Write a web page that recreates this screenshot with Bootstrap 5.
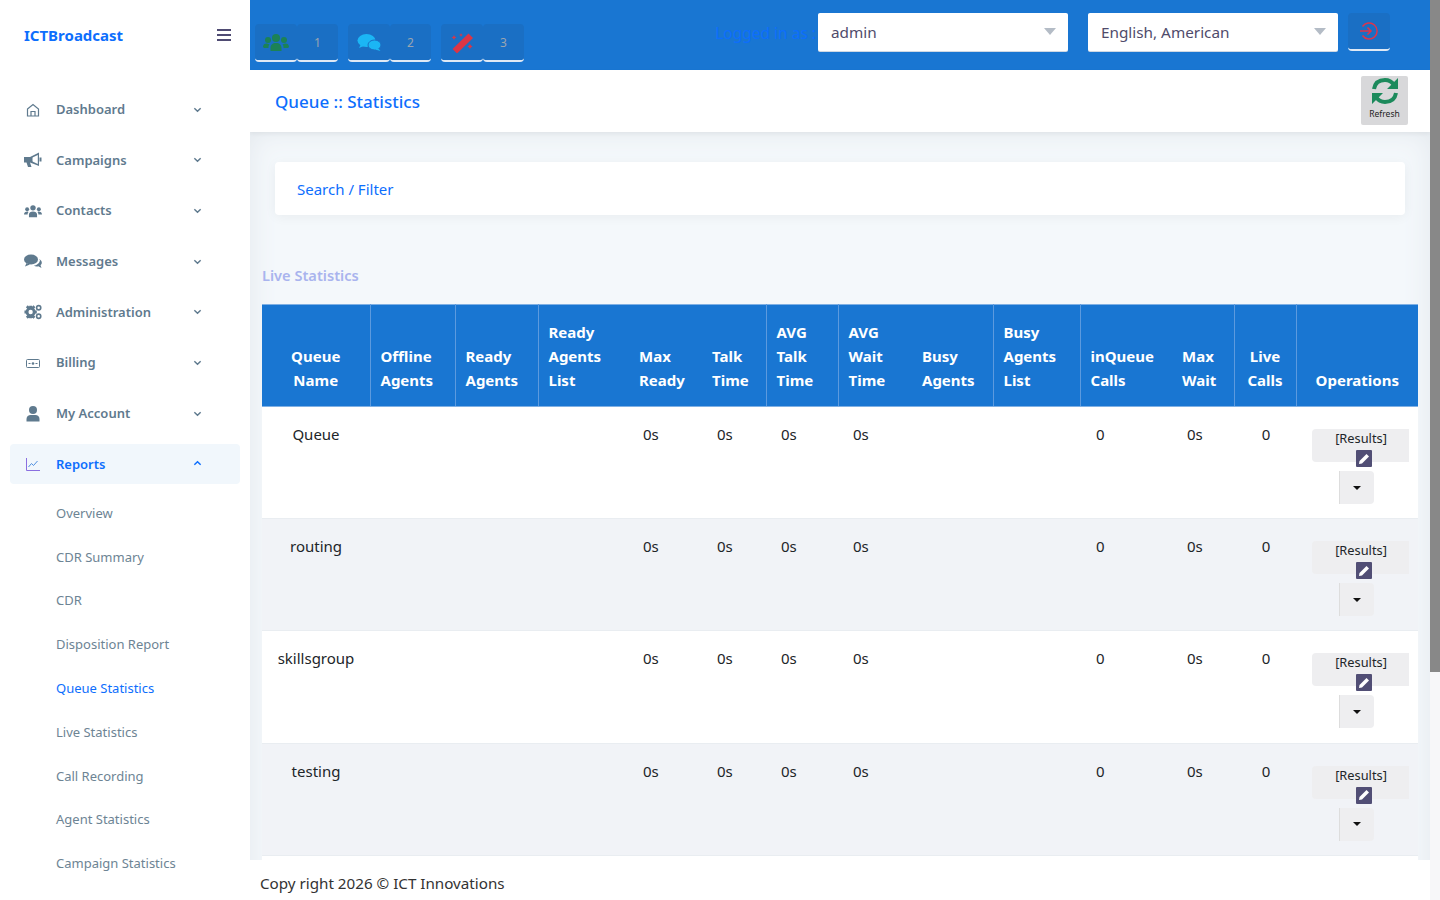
<!DOCTYPE html>
<html lang="en">
<head>
  <title>Queue Statistics</title>
  <meta charset="utf-8">
  <meta name="viewport" content="width=device-width, initial-scale=1">
  <link href="https://cdn.jsdelivr.net/npm/bootstrap@5.3.1/dist/css/bootstrap.min.css" rel="stylesheet">
  <script src="https://cdn.jsdelivr.net/npm/bootstrap@5.3.1/dist/js/bootstrap.bundle.min.js"></script>
  <style>
    html, body { height: 900px; overflow: hidden; }
    body { font-family: "Noto Sans", "Open Sans", sans-serif; background: #f4f8fb; color: #212529; }
    .app-shell { height: 900px; width: 1440px; }
    /* sidebar */
    .side-col { width: 250px; flex: none; height: 900px; background: #fff; overflow: hidden; z-index: 5; }
    .side-logo { height: 70px; padding: 0 19px 0 24px; }
    .side-logo b { color: #0d6efd; font-size: 15px; font-weight: 700; }
    .burger { width: 14px; height: 12px; border-top: 2px solid #4f4b73; border-bottom: 2px solid #4f4b73; position: relative; }
    .burger::after { content: ""; position: absolute; left: 0; right: 0; top: 3px; border-top: 2px solid #4f4b73; }
    .side-menu { padding: 19.6px 10px 0; list-style: none; margin: 0; }
    .side-item { height: 40px; margin-bottom: 10.7px; padding: 0 38px 0 14px; color: #5f7a8e; font-size: 13px; font-weight: 600; border-radius: 4px; }
    .side-item svg.ico { width: 18px; height: 18px; fill: #5f7a8e; margin-right: 14px; flex: none; }
    .side-item .chev { width: 9px; height: 9px; margin-left: auto; margin-top: -1px; fill: none; stroke: currentColor; stroke-width: 1.6; }
    .side-item.on { background: #f1f7fc; color: #0d6efd; margin-bottom: 7.4px; }
    .side-sub { list-style: none; margin: 0; padding: 0; }
    .side-sub li { height: 43.8px; padding-left: 56px; font-size: 13px; color: #6d8494; line-height: 43.8px; }
    .side-sub li.on { color: #0d6efd; }
    /* top bar */
    .main-col { width: 1180px; flex: none; height: 900px; overflow: hidden; position: relative; }
    .top-bar { height: 70px; background: #1976d2; padding: 13px 40px 0 5px; }
    .btn-pair { display: flex; height: 38px; margin-top: 11px; margin-right: 10px; }
    .btn-pair span { height: 38px; border-radius: 4px; background: #1a6fc4; border-bottom: 2px solid #dfe9f5; display: flex; align-items: center; justify-content: center; color: #9aa5b1; font-size: 12px; padding-top: 2px; }
    .btn-pair .pair-a { width: 42px; }
    .btn-pair .pair-b { width: 41px; }
    .logged { color: #0d6efd; font-size: 15.5px; margin-left: auto; margin-right: 2px; line-height: 40px; white-space: nowrap; }
    .fake-select { width: 250px; height: 38px; background: #fff; border-radius: 2px; color: #4f4b6b; font-size: 15.3px; padding: 1px 13px 0; margin-right: 20px; box-shadow: 0 1px 0 #cfd8e3; }
    .fake-select i { margin-left: auto; border: 6px solid transparent; border-top: 7px solid #b4bcc6; border-bottom: 0; margin-right: -1px; margin-top: -3px; }
    .out-btn { width: 42px; height: 38px; background: #1a6fc4; border-radius: 4px; border-bottom: 2px solid #dfe9f5; margin-left: -10px; }
    /* page title */
    .title-bar { height: 62px; background: #fff; padding: 0 22px 0 25px; box-shadow: 0 2px 4px rgba(0,0,0,.05); position: relative; }
    .title-bar h1 { font-size: 17px; color: #0d6efd; font-weight: 500; margin: 2px 0 0; }
    .refresh-btn { width: 47px; height: 49px; background: #d8d8da; border-radius: 2px; font-size: 8.5px; color: #222; margin-top: -1px; }
    .refresh-btn svg { margin-bottom: 2px; }
    .content-pad { padding: 30px 12px 0; height: 768px; box-shadow: inset 0 0 28px #e3e8ed; }
    .filter-card { height: 53px; margin: 0 13px 49px; background: #fff; border-radius: 4px; padding: 2px 0 0 22px; color: #0d6efd; font-size: 15px; box-shadow: 0 2px 12px rgba(0,0,0,.05); }
    .live-head { color: #a9b4ee; font-size: 14.6px; font-weight: 600; height: 21px; margin-bottom: 19px; line-height: 23px; }
    /* table */
    .stat-table { width: 1156px; table-layout: fixed; border-collapse: collapse; margin: 0; font-size: 15px; }
    .stat-table thead th { background: #1976d2; color: #fff; font-weight: 700; font-size: 15px; line-height: 24px; padding: 0 10px 14px; height: 102px; vertical-align: bottom; border-top: 1px solid #7fb0e4; border-bottom: 1px solid #7fb0e4; }
    .stat-table thead th.ln { border-right: 1px solid #5c9ade; }
    .stat-table td { height: 112.2px; vertical-align: top; text-align: center; padding: 17px 0 0; border-bottom: 1px solid #e9edf1; line-height: 21px; }
    .stat-table td.t-m { text-align: left; padding-left: 14px; }
    .stat-table td.t-l { text-align: left; padding-left: 15px; }
    .stat-table td.t-q { text-align: left; padding-left: 16px; }
    .stat-table td.t-c { padding-left: 2px; }
    .stat-table tbody tr:nth-child(odd) td { background: #fff; }
    .stat-table tbody tr:nth-child(even) td { background: #f1f3f7; }
    .stat-table td.op-cell { padding-top: 22px; }
    .res-btn { width: 97px; height: 33px; margin-left: 16px; background: #eeeef0; border-radius: 4px 0 0 4px; font-size: 12.8px; line-height: 19px; position: relative; text-align: center; padding-left: 1px; }
    .edit-tag { position: absolute; left: 44px; top: 21px; width: 16px; height: 17px; background: #514e75; border-radius: 1px; display: flex; align-items: center; justify-content: center; }
    .caret-btn { width: 35px; height: 33px; margin: 9px 0 0 43px; background: #eeeef0; border-radius: 0 4px 4px 0; border-left: 1px solid #ddd; display: flex; align-items: center; justify-content: center; }
    .caret-btn i { border: 4px solid transparent; border-top: 4px solid #111; border-bottom: 0; }
    .foot-bar { position: absolute; left: 0; right: 0; bottom: 0; height: 40px; background: #fff; padding: 13px 10px 0; font-size: 15.2px; line-height: 21px; color: #333; }
    /* fake scrollbar */
    .scroll-rail { width: 10px; flex: none; height: 900px; background: #f7f7f9; }
    .scroll-thumb { height: 672px; background: #888; }
  </style>
</head>
<body>
<div class="app-shell d-flex">

  <!-- sidebar -->
  <div class="side-col">
    <div class="side-logo d-flex align-items-center justify-content-between">
      <b>ICTBroadcast</b>
      <div class="burger"></div>
    </div>
    <ul class="side-menu">
      <li class="side-item d-flex align-items-center">
        <svg class="ico" viewBox="0 0 18 18"><path fill="none" stroke="#5f7a8e" stroke-width="1.2" d="M3.5 8 9 3.500 14.500 8v7h-11zM7 15v-4.500h4V15"/></svg>Dashboard
        <svg class="chev" viewBox="0 0 10 10"><path d="M1.500 3.500 5 7l3.500-3.500"/></svg>
      </li>
      <li class="side-item d-flex align-items-center">
        <svg class="ico" viewBox="0 0 18 18"><path d="M0 6h6l9-4.500V15L6 11.500l1.500 4.500H4l-1.500-4.500H0z"/><path fill="#fff" d="M13.800 4 8 6.800v3.400l5.800 2.800z"/><path d="M7 6h1.500v5.500H7z"/><path d="M15.500 6.500H17.500v4h-2z"/></svg>Campaigns
        <svg class="chev" viewBox="0 0 10 10"><path d="M1.500 3.500 5 7l3.500-3.500"/></svg>
      </li>
      <li class="side-item d-flex align-items-center">
        <svg class="ico" viewBox="0 0 20 18"><circle cx="10" cy="5.500" r="3"/><circle cx="3.500" cy="7" r="2.200"/><circle cx="16.500" cy="7" r="2.200"/><path d="M5.500 16v-3c0-2.500 2-3.500 4.500-3.500s4.500 1 4.500 3.500v3zM0 13c0-2.500 1.500-3.500 4-3.500l1 .6C4.200 11 4 12 4 13zM20 13c0-2.500-1.500-3.500-4-3.500l-1 .6c.8.900 1 1.900 1 2.900z"/></svg>Contacts
        <svg class="chev" viewBox="0 0 10 10"><path d="M1.500 3.500 5 7l3.500-3.500"/></svg>
      </li>
      <li class="side-item d-flex align-items-center">
        <svg class="ico" viewBox="0 0 18 18"><ellipse cx="7" cy="6.500" rx="7" ry="5"/><path d="M2.500 10 1 13.500 6 11.500z"/><path d="M15 6c1.800 1 3 2.300 2.800 4-.1 1-.7 1.800-1.300 2.300l1 2.700-3.200-1.700c-1.500.4-3.300.2-4.500-.7 3.500-.3 6.500-2.900 6.200-6.600z"/></svg>Messages
        <svg class="chev" viewBox="0 0 10 10"><path d="M1.500 3.500 5 7l3.500-3.500"/></svg>
      </li>
      <li class="side-item d-flex align-items-center">
        <svg class="ico" viewBox="0 0 19 18"><circle cx="7" cy="9" r="3.800" fill="none" stroke="#5f7a8e" stroke-width="3"/><path d="M5.500 2.500h3v3h-3zM5.500 12.500h3v3h-3zM.5 7.500h3v3h-3zM10.500 7.500h3v3h-3zM2 4l2-2 2 2-2 2zM8 4l2-2 2 2-2 2zM2 14l2-2 2 2-2 2zM8 14l2-2 2 2-2 2z"/><circle cx="15.500" cy="4.500" r="2.200" fill="none" stroke="#5f7a8e" stroke-width="1.700"/><circle cx="15.500" cy="13.500" r="2.200" fill="none" stroke="#5f7a8e" stroke-width="1.700"/></svg>Administration
        <svg class="chev" viewBox="0 0 10 10"><path d="M1.500 3.500 5 7l3.500-3.500"/></svg>
      </li>
      <li class="side-item d-flex align-items-center">
        <svg class="ico" viewBox="0 0 18 18"><rect x="2.500" y="5.500" width="13" height="8" rx="1" fill="none" stroke="#5f7a8e" stroke-width="1"/><circle cx="9" cy="9.500" r="1.300"/><path d="M4.500 9h2v1h-2zM11.500 9h2v1h-2z"/></svg>Billing
        <svg class="chev" viewBox="0 0 10 10"><path d="M1.500 3.500 5 7l3.500-3.500"/></svg>
      </li>
      <li class="side-item d-flex align-items-center">
        <svg class="ico" viewBox="0 0 18 18"><circle cx="9" cy="5" r="4"/><path d="M2.500 16.500v-2.500c0-2.500 2-4 4-4h5c2 0 4 1.500 4 4v2.500z"/></svg>My Account
        <svg class="chev" viewBox="0 0 10 10"><path d="M1.500 3.500 5 7l3.500-3.500"/></svg>
      </li>
      <li class="side-item on d-flex align-items-center">
        <svg class="ico" viewBox="0 0 18 18"><path fill="none" stroke="#8a6fe0" stroke-width="1" d="M2.500 3v12.500H16"/><path fill="none" stroke="#4f8fe0" stroke-width="1" d="m4.500 12 3-3.500 2 2 4-4.500"/></svg>Reports
        <svg class="chev" viewBox="0 0 10 10"><path d="M1.500 6.500 5 3l3.500 3.500"/></svg>
      </li>
    </ul>
    <ul class="side-sub">
      <li>Overview</li>
      <li>CDR Summary</li>
      <li>CDR</li>
      <li>Disposition Report</li>
      <li class="on">Queue Statistics</li>
      <li>Live Statistics</li>
      <li>Call Recording</li>
      <li>Agent Statistics</li>
      <li>Campaign Statistics</li>
    </ul>
  </div>

  <!-- main -->
  <div class="main-col">
    <div class="top-bar d-flex">
      <div class="btn-pair">
        <span class="pair-a"><svg width="26" height="20" viewBox="0 0 26 20" fill="#1c8256"><circle cx="13" cy="5" r="4"/><circle cx="5" cy="7" r="3"/><circle cx="21" cy="7" r="3"/><path d="M7.500 18v-3c0-3 2-5 5.500-5s5.500 2 5.500 5v3zM0 14c0-2.500 1.500-3.500 4-3.500l2.500 1C5.500 12.500 5.500 13.500 5.500 15H1zM26 14c0-2.500-1.500-3.500-4-3.500l-2.500 1c1 1 1 2 1 3.500H25z"/></svg></span>
        <span class="pair-b">1</span>
      </div>
      <div class="btn-pair">
        <span class="pair-a"><svg width="25" height="20" viewBox="0 0 25 20" fill="#1bb6f5"><ellipse cx="9.500" cy="7.500" rx="9" ry="6.500"/><path d="M4 11 2 15l6-2.500z"/><ellipse cx="17.500" cy="12" rx="6.500" ry="5" stroke="#1a6fc4" stroke-width="1"/><path d="M21 15l2.500 3-5.500-1.500z"/></svg></span>
        <span class="pair-b">2</span>
      </div>
      <div class="btn-pair">
        <span class="pair-a"><svg width="24" height="22" viewBox="0 0 24 22" fill="#dc3545"><path d="M18.500 1.500 23 6 7 21.500 2.500 17z"/><path d="M4 3l.8 1.700L6.500 5.500l-1.700.8L4 8l-.8-1.700L1.500 5.500l1.700-.8zM11 1l.6 1.400 1.400.6-1.400.6-.6 1.400-.6-1.400L9 3l1.400-.6zM20 12l.9 1.600 1.600.9-1.600.9L20 17l-.9-1.600-1.600-.9 1.600-.9z"/></svg></span>
        <span class="pair-b">3</span>
      </div>
      <div class="logged">Logged in as :</div>
      <div class="fake-select d-flex align-items-center">admin<i></i></div>
      <div class="fake-select d-flex align-items-center">English, American<i></i></div>
      <div class="out-btn d-flex align-items-center justify-content-center">
        <svg width="20" height="20" viewBox="0 0 20 20" fill="none" stroke="#e0344a" stroke-width="1.500"><path d="M3.500 5.500a8 8 0 1 1 0 9M1 10h11M8.500 6.500 12 10l-3.500 3.500"/></svg>
      </div>
    </div>

    <div class="title-bar d-flex align-items-center justify-content-between">
      <h1>Queue :: Statistics</h1>
      <div class="refresh-btn d-flex flex-column align-items-center">
        <svg width="30" height="30" viewBox="0 0 30 30" fill="none" stroke="#1c8a5c" stroke-width="4"><path d="M4 13C5 7 9 4 15 4c4 0 7 2 9 5"/><path d="M26 17c-1 6-5 9-11 9-4 0-7-2-9-5"/><path fill="#1c8a5c" stroke="none" d="M28 2v11H17zM2 28V17h11z"/></svg>
        <div>Refresh</div>
      </div>
    </div>

    <div class="content-pad">
      <div class="filter-card d-flex align-items-center">Search / Filter</div>
      <div class="live-head">Live Statistics</div>
      <table class="stat-table">
        <colgroup>
          <col style="width:108px"><col style="width:85px"><col style="width:83px"><col style="width:91px"><col style="width:73px"><col style="width:64px"><col style="width:72px"><col style="width:74px"><col style="width:81px"><col style="width:87px"><col style="width:92px"><col style="width:62px"><col style="width:62px"><col style="width:122px">
        </colgroup>
        <thead>
          <tr>
            <th class="ln text-center">Queue<br>Name</th>
            <th class="ln">Offline<br>Agents</th>
            <th class="ln">Ready<br>Agents</th>
            <th>Ready<br>Agents<br>List</th>
            <th>Max<br>Ready</th>
            <th class="ln">Talk<br>Time</th>
            <th class="ln">AVG<br>Talk<br>Time</th>
            <th>AVG<br>Wait<br>Time</th>
            <th class="ln">Busy<br>Agents</th>
            <th class="ln">Busy<br>Agents<br>List</th>
            <th>inQueue<br>Calls</th>
            <th class="ln">Max<br>Wait</th>
            <th class="ln text-center">Live<br>Calls</th>
            <th class="text-center">Operations</th>
          </tr>
        </thead>
        <tbody>
          <tr>
            <td>Queue</td><td></td><td></td><td></td><td class="t-m">0s</td><td class="t-l">0s</td><td class="t-l">0s</td><td class="t-l">0s</td><td></td><td></td><td class="t-q">0</td><td class="t-l">0s</td><td class="t-c">0</td>
            <td class="op-cell"><div class="res-btn">[Results]<span class="edit-tag"><svg width="12" height="12" viewBox="0 0 12 12" fill="#fff"><path d="M8.500 1 11 3.500 4 10.500 1 11l.5-3z"/></svg></span></div><div class="caret-btn"><i></i></div></td>
          </tr>
          <tr>
            <td>routing</td><td></td><td></td><td></td><td class="t-m">0s</td><td class="t-l">0s</td><td class="t-l">0s</td><td class="t-l">0s</td><td></td><td></td><td class="t-q">0</td><td class="t-l">0s</td><td class="t-c">0</td>
            <td class="op-cell"><div class="res-btn">[Results]<span class="edit-tag"><svg width="12" height="12" viewBox="0 0 12 12" fill="#fff"><path d="M8.500 1 11 3.500 4 10.500 1 11l.5-3z"/></svg></span></div><div class="caret-btn"><i></i></div></td>
          </tr>
          <tr>
            <td>skillsgroup</td><td></td><td></td><td></td><td class="t-m">0s</td><td class="t-l">0s</td><td class="t-l">0s</td><td class="t-l">0s</td><td></td><td></td><td class="t-q">0</td><td class="t-l">0s</td><td class="t-c">0</td>
            <td class="op-cell"><div class="res-btn">[Results]<span class="edit-tag"><svg width="12" height="12" viewBox="0 0 12 12" fill="#fff"><path d="M8.500 1 11 3.500 4 10.500 1 11l.5-3z"/></svg></span></div><div class="caret-btn"><i></i></div></td>
          </tr>
          <tr>
            <td>testing</td><td></td><td></td><td></td><td class="t-m">0s</td><td class="t-l">0s</td><td class="t-l">0s</td><td class="t-l">0s</td><td></td><td></td><td class="t-q">0</td><td class="t-l">0s</td><td class="t-c">0</td>
            <td class="op-cell"><div class="res-btn">[Results]<span class="edit-tag"><svg width="12" height="12" viewBox="0 0 12 12" fill="#fff"><path d="M8.500 1 11 3.500 4 10.500 1 11l.5-3z"/></svg></span></div><div class="caret-btn"><i></i></div></td>
          </tr>
          <tr><td colspan="14"></td></tr>
        </tbody>
      </table>
    </div>

    <div class="foot-bar">Copy right 2026 © ICT Innovations</div>
  </div>

  <div class="scroll-rail"><div class="scroll-thumb"></div></div>
</div>
</body>
</html>
